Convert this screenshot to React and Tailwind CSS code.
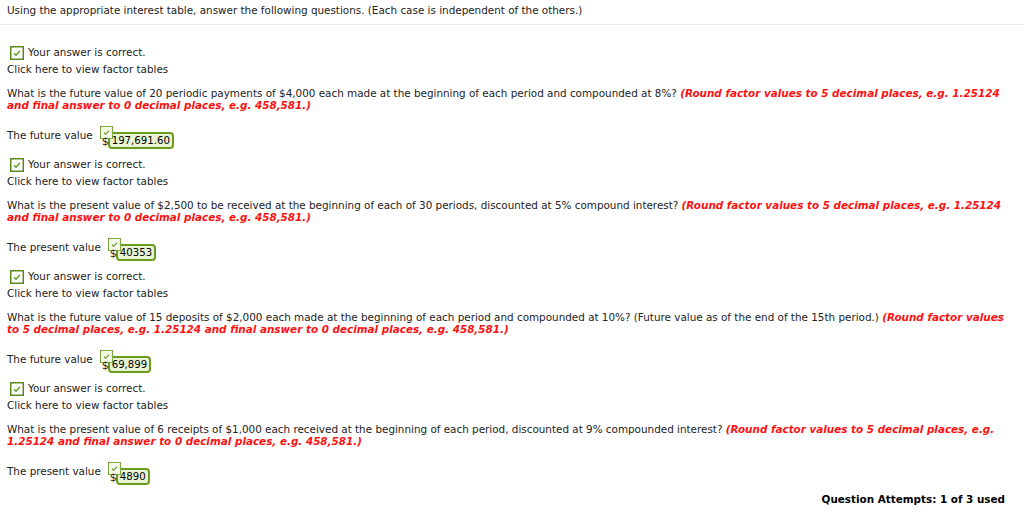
const font = { fontFamily: '"DejaVu Sans", Verdana, sans-serif' }

const Check = ({ className = '' }) => (
    <svg viewBox="0 0 14 14" className={className}>
        <rect x="0.75" y="0.75" width="12.5" height="12.5" fill="#fff" stroke="#5c8a1c" strokeWidth="1.5" />
        <path d="M4 7.2 L6 9.2 L10 5" fill="none" stroke="#5c9a2a" strokeWidth="1.4" />
    </svg>
)

const SmallCheck = () => (
    <svg viewBox="0 0 13 13" className="absolute top-0 -left-[2px] z-20 w-[13px] h-[13px]">
        <rect x="0.5" y="0.5" width="12" height="12" fill="#f4faea" stroke="#7aa83a" strokeWidth="1" />
        <path d="M3.8 6.6 L5.6 8.2 L9 4.8" fill="none" stroke="#6a9a2a" strokeWidth="1.2" />
    </svg>
)

const Answer = ({ label, value }) => (
    <div className="flex items-end text-[10.4px] text-[#222]">
        <span className="mr-[9px] mb-[5px]">{label}</span>
        <span className="relative inline-flex items-end pt-[6px]">
            <SmallCheck />
            <span className="relative z-30 text-[11px] text-[#2a1a2a] leading-[12px] mb-[1px]">$</span>
            <span className="relative z-10 -ml-[1px] px-[2px] border-2 border-[#6a9a1e] rounded-[4px] bg-[#e8f4d4] leading-[13px] text-[10.2px] text-black">
                {value}
            </span>
        </span>
    </div>
)

const Section = ({ question, hint, label, value }) => (
    <div className="flex flex-col">
        <div className="flex items-center gap-[4px] h-[17px] pl-[3px]">
            <Check className="w-[14px] h-[14px]" />
            <span>Your answer is correct.</span>
        </div>
        <div className="h-[17px] leading-[17px]">Click here to view factor tables</div>
        <p className="mt-[9px] leading-[12px] pr-[12px]">
            {question}{' '}
            <span className="text-[#ff1010] font-bold italic">{hint}</span>
        </p>
        <div className="mt-[15px]">
            <Answer label={label} value={value} />
        </div>
    </div>
)

const sections = [
    {
        question: 'What is the future value of 20 periodic payments of $4,000 each made at the beginning of each period and compounded at 8%?',
        hint: '(Round factor values to 5 decimal places, e.g. 1.25124 and final answer to 0 decimal places, e.g. 458,581.)',
        label: 'The future value',
        value: '197,691.60',
    },
    {
        question: 'What is the present value of $2,500 to be received at the beginning of each of 30 periods, discounted at 5% compound interest?',
        hint: '(Round factor values to 5 decimal places, e.g. 1.25124 and final answer to 0 decimal places, e.g. 458,581.)',
        label: 'The present value',
        value: '40353',
    },
    {
        question: 'What is the future value of 15 deposits of $2,000 each made at the beginning of each period and compounded at 10%? (Future value as of the end of the 15th period.)',
        hint: '(Round factor values to 5 decimal places, e.g. 1.25124 and final answer to 0 decimal places, e.g. 458,581.)',
        label: 'The future value',
        value: '69,899',
    },
    {
        question: 'What is the present value of 6 receipts of $1,000 each received at the beginning of each period, discounted at 9% compounded interest?',
        hint: '(Round factor values to 5 decimal places, e.g. 1.25124 and final answer to 0 decimal places, e.g. 458,581.)',
        label: 'The present value',
        value: '4890',
    },
]

export default function App() {
    return (
        <div style={font} className="w-[1024px] h-[529px] bg-white text-[10.4px] text-[#222] overflow-hidden">
            <div className="pl-[7px] pt-[3px] h-[25px] border-b border-[#ececec]">
                Using the appropriate interest table, answer the following questions. (Each case is independent of the others.)
            </div>
            <div className="pl-[7px] pr-[4px] pt-[19px] flex flex-col gap-[7px]">
                {sections.map((s, i) => (
                    <Section key={i} {...s} />
                ))}
            </div>
            <div className="flex justify-end pr-[19px] mt-[7px] font-bold text-[10.4px] text-black">
                Question Attempts: 1 of 3 used
            </div>
        </div>
    )
}
